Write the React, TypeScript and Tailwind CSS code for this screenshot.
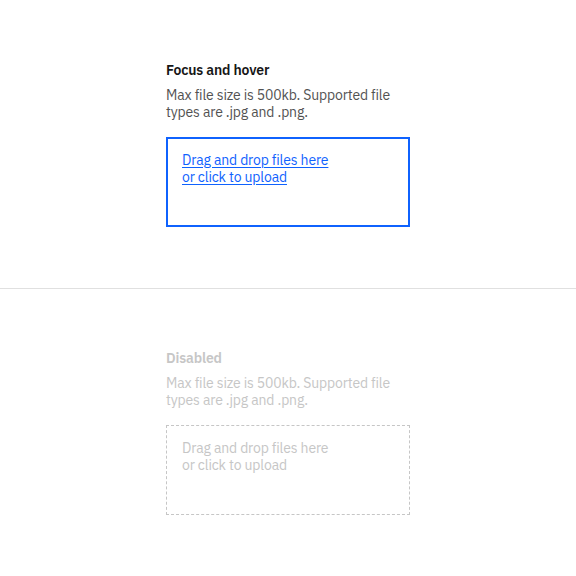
import React from "react";

interface UploaderProps {
  title: string;
  disabled?: boolean;
}

const Uploader: React.FC<UploaderProps> = ({ title, disabled = false }) => {
  return (
    <div className="w-[244px] text-sm leading-[17px] tracking-[-0.15px]">
      <p
        className={`mb-2 font-semibold ${
          disabled ? "text-[#c6c6c6]" : "text-[#161616]"
        }`}
      >
        {title}
      </p>
      <p className={`mb-4 ${disabled ? "text-[#c6c6c6]" : "text-[#525252]"}`}>
        Max file size is 500kb. Supported file types are .jpg and .png.
      </p>
      {disabled ? (
        <div className="h-[90px] border border-dashed border-[#c6c6c6] px-[15px] py-[14px] text-[#c6c6c6]">
          Drag and drop files here
          <br />
          or click to upload
        </div>
      ) : (
        <div className="h-[90px] border-2 border-[#0f62fe] px-[14px] py-[13px]">
          <a href="#" className="text-[#0f62fe] underline underline-offset-2">
            Drag and drop files here
            <br />
            or click to upload
          </a>
        </div>
      )}
    </div>
  );
};

export default function App() {
  return (
    <div className="flex h-[576px] w-[576px] flex-col bg-white font-['IBM_Plex_Sans','Noto_Sans',sans-serif]">
      <section className="flex h-[288px] items-center justify-center">
        <Uploader title="Focus and hover" />
      </section>
      <div className="h-px bg-[#e0e0e0]" />
      <section className="flex flex-1 items-center justify-center">
        <Uploader title="Disabled" disabled />
      </section>
    </div>
  );
}
